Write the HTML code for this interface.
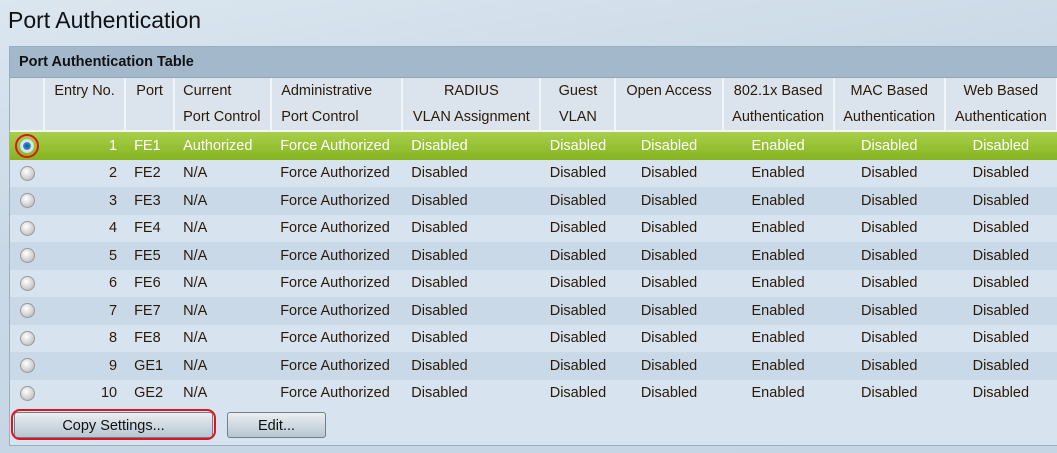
<!DOCTYPE html>
<html><head><style>
body{margin:0;width:1057px;height:453px;overflow:hidden;background:linear-gradient(170deg,#dbe6ef 0%,#c9d8e6 40%,#c5d5e4 100%);font-family:"Liberation Sans",Arial,sans-serif;}
h1{position:absolute;left:8px;top:7px;margin:0;font-size:23px;font-weight:normal;color:#111;}
.box{position:absolute;left:9px;top:46px;width:1060px;height:398px;border:1px solid #9aafc0;background:#d7e3ee;}
.tt{height:30px;background:#a3b9cb;font-weight:bold;font-size:14.5px;line-height:30px;padding-left:9px;color:#111;border-bottom:1px solid #8ea6ba;}
table{border-collapse:collapse;font-size:14.5px;color:#2a1a0a;table-layout:fixed;width:1090px}
th{font-weight:normal;background:#dbe4ec;border-left:2px solid #f3f6f9;border-bottom:2px solid #f3f6f9;vertical-align:top;line-height:26px;padding:0;height:50px;white-space:nowrap;overflow:hidden}
th:first-child{border-left:none}
td{height:27.5px;padding:0;white-space:nowrap;overflow:hidden}
tr.a td{background:#d7e3ee}
tr.b td{background:#c9d9e8}
tr.s td{background:linear-gradient(#a8cf4a,#86b421);color:#fff}
.r{text-align:right;padding-right:8px}
.l{padding-left:9px}
.c{text-align:center}
.rad{display:inline-block;width:13px;height:13px;border-radius:50%;background:radial-gradient(circle at 40% 35%,#fff,#d0d0d0 60%,#a8a8a8);border:1px solid #999;margin-left:10px;vertical-align:middle}
.sel{position:relative;display:inline-block;margin-left:5px;width:24px;height:24px;border:2px solid #e0141c;border-radius:50%;box-sizing:border-box;vertical-align:middle}
.sel i{position:absolute;left:3px;top:3px;width:14px;height:14px;border-radius:50%;background:radial-gradient(circle,#0a5d9a 0,#2e88c8 35%,#e8eef2 45%,#bbb 100%);}
.btn{position:absolute;top:412px;height:26px;border:1px solid #6f7f8c;border-radius:3px;background:linear-gradient(#eaeef1,#b7c6d2);font-size:14.5px;text-align:center;line-height:26px;color:#111;box-sizing:border-box}
</style></head><body>
<h1>Port Authentication</h1>
<div class="box">
<div class="tt">Port Authentication Table</div>
<table>
<colgroup><col style="width:34px"><col style="width:81px"><col style="width:49px"><col style="width:97px"><col style="width:131px"><col style="width:138px"><col style="width:75px"><col style="width:107px"><col style="width:111px"><col style="width:111px"><col style="width:112px"><col style="width:43px"></colgroup>
<tr><th></th><th>Entry No.</th><th>Port</th><th style="text-align:left;padding-left:8px">Current<br>Port Control</th><th style="text-align:left;padding-left:9px">Administrative<br>Port Control</th><th>RADIUS<br>VLAN Assignment</th><th>Guest<br>VLAN</th><th>Open Access</th><th>802.1x Based<br>Authentication</th><th>MAC Based<br>Authentication</th><th>Web Based<br>Authentication</th><th></th></tr>
<tr class="s"><td><span class="sel"><i></i></span></td><td class="r">1</td><td class="l">FE1</td><td class="l">Authorized</td><td class="l">Force Authorized</td><td class="l">Disabled</td><td class="c">Disabled</td><td class="c">Disabled</td><td class="c">Enabled</td><td class="c">Disabled</td><td class="c">Disabled</td><td></td></tr>
<tr class="a"><td><span class="rad"></span></td><td class="r">2</td><td class="l">FE2</td><td class="l">N/A</td><td class="l">Force Authorized</td><td class="l">Disabled</td><td class="c">Disabled</td><td class="c">Disabled</td><td class="c">Enabled</td><td class="c">Disabled</td><td class="c">Disabled</td><td></td></tr>
<tr class="b"><td><span class="rad"></span></td><td class="r">3</td><td class="l">FE3</td><td class="l">N/A</td><td class="l">Force Authorized</td><td class="l">Disabled</td><td class="c">Disabled</td><td class="c">Disabled</td><td class="c">Enabled</td><td class="c">Disabled</td><td class="c">Disabled</td><td></td></tr>
<tr class="a"><td><span class="rad"></span></td><td class="r">4</td><td class="l">FE4</td><td class="l">N/A</td><td class="l">Force Authorized</td><td class="l">Disabled</td><td class="c">Disabled</td><td class="c">Disabled</td><td class="c">Enabled</td><td class="c">Disabled</td><td class="c">Disabled</td><td></td></tr>
<tr class="b"><td><span class="rad"></span></td><td class="r">5</td><td class="l">FE5</td><td class="l">N/A</td><td class="l">Force Authorized</td><td class="l">Disabled</td><td class="c">Disabled</td><td class="c">Disabled</td><td class="c">Enabled</td><td class="c">Disabled</td><td class="c">Disabled</td><td></td></tr>
<tr class="a"><td><span class="rad"></span></td><td class="r">6</td><td class="l">FE6</td><td class="l">N/A</td><td class="l">Force Authorized</td><td class="l">Disabled</td><td class="c">Disabled</td><td class="c">Disabled</td><td class="c">Enabled</td><td class="c">Disabled</td><td class="c">Disabled</td><td></td></tr>
<tr class="b"><td><span class="rad"></span></td><td class="r">7</td><td class="l">FE7</td><td class="l">N/A</td><td class="l">Force Authorized</td><td class="l">Disabled</td><td class="c">Disabled</td><td class="c">Disabled</td><td class="c">Enabled</td><td class="c">Disabled</td><td class="c">Disabled</td><td></td></tr>
<tr class="a"><td><span class="rad"></span></td><td class="r">8</td><td class="l">FE8</td><td class="l">N/A</td><td class="l">Force Authorized</td><td class="l">Disabled</td><td class="c">Disabled</td><td class="c">Disabled</td><td class="c">Enabled</td><td class="c">Disabled</td><td class="c">Disabled</td><td></td></tr>
<tr class="b"><td><span class="rad"></span></td><td class="r">9</td><td class="l">GE1</td><td class="l">N/A</td><td class="l">Force Authorized</td><td class="l">Disabled</td><td class="c">Disabled</td><td class="c">Disabled</td><td class="c">Enabled</td><td class="c">Disabled</td><td class="c">Disabled</td><td></td></tr>
<tr class="a"><td><span class="rad"></span></td><td class="r">10</td><td class="l">GE2</td><td class="l">N/A</td><td class="l">Force Authorized</td><td class="l">Disabled</td><td class="c">Disabled</td><td class="c">Disabled</td><td class="c">Enabled</td><td class="c">Disabled</td><td class="c">Disabled</td><td></td></tr>
</table>
</div>
<div class="btn" style="left:14px;width:199px">Copy Settings...</div>
<div class="btn" style="left:11px;top:409px;width:205px;height:31px;border:2px solid #e0141c;border-radius:9px;background:none"></div>
<div class="btn" style="left:227px;width:99px">Edit...</div>
</body></html>
